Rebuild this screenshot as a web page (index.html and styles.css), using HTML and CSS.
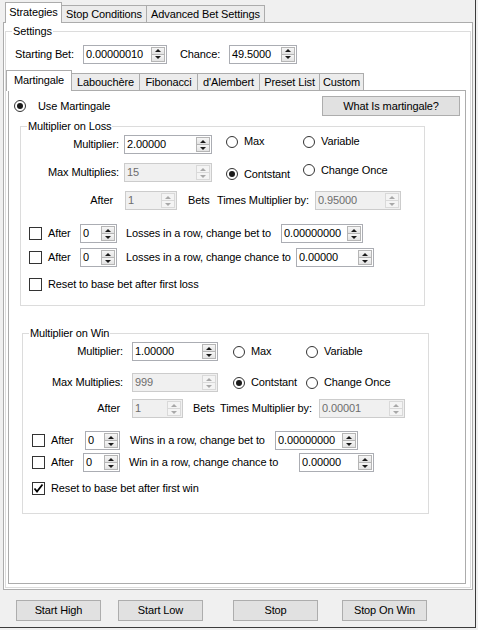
FILE: index.html
```html
<!DOCTYPE html>
<html>
<head>
<meta charset="utf-8">
<link rel="stylesheet" href="styles.css">
</head>
<body>
<div class="window">
  <div class="tabstrip outer-strip">
    <div class="tab sel t-strat">Strategies</div>
    <div class="tab t-stop">Stop Conditions</div>
    <div class="tab t-adv">Advanced Bet Settings</div>
  </div>
  <div class="page outer-page">
    <div class="group settings">
      <div class="gtitle">Settings</div>
      <div class="srow">
        <span class="s-lbl1">Starting Bet:</span>
        <div class="num s-bet"><span class="val">0.00000010</span><span class="spin"><span class="up"></span><span class="dn"></span></span></div>
        <span class="s-lbl2">Chance:</span>
        <div class="num s-ch"><span class="val">49.5000</span><span class="spin"><span class="up"></span><span class="dn"></span></span></div>
      </div>
      <div class="tabstrip inner-strip">
        <div class="tab sel i-mart">Martingale</div>
        <div class="tab i-lab">Labouchère</div>
        <div class="tab i-fib">Fibonacci</div>
        <div class="tab i-dal">d'Alembert</div>
        <div class="tab i-pre">Preset List</div>
        <div class="tab i-cus">Custom</div>
      </div>
      <div class="page inner-page">
        <div class="toprow">
          <div class="radio on use"><span class="rb"></span><span class="rt">Use Martingale</span></div>
          <div class="btn what">What Is martingale?</div>
        </div>

        <div class="group loss">
          <div class="gtitle">Multiplier on Loss</div>
          <div class="grow r1">
            <span class="flabel">Multiplier:</span>
            <div class="num mult"><span class="val">2.00000</span><span class="spin"><span class="up"></span><span class="dn"></span></span></div>
            <div class="radio opt1"><span class="rb"></span><span class="rt">Max</span></div>
            <div class="radio opt2"><span class="rb"></span><span class="rt">Variable</span></div>
          </div>
          <div class="grow r2">
            <span class="flabel">Max Multiplies:</span>
            <div class="num mult dis"><span class="val">15</span><span class="spin"><span class="up"></span><span class="dn"></span></span></div>
            <div class="radio on opt1"><span class="rb"></span><span class="rt">Contstant</span></div>
            <div class="radio opt2"><span class="rb"></span><span class="rt">Change Once</span></div>
          </div>
          <div class="grow r3">
            <span class="flabel after">After</span>
            <div class="num aft-in dis"><span class="val">1</span><span class="spin"><span class="up"></span><span class="dn"></span></span></div>
            <span class="bets">Bets</span>
            <span class="times">Times Multiplier by:</span>
            <div class="num times-in dis"><span class="val">0.95000</span><span class="spin"><span class="up"></span><span class="dn"></span></span></div>
          </div>
          <div class="grow r4">
            <span class="cb"></span>
            <span class="after-t">After</span>
            <div class="num cnt"><span class="val">0</span><span class="spin"><span class="up"></span><span class="dn"></span></span></div>
            <span class="rowtext t1">Losses in a row, change bet to</span>
            <div class="num bet"><span class="val">0.00000000</span><span class="spin"><span class="up"></span><span class="dn"></span></span></div>
          </div>
          <div class="grow r5">
            <span class="cb"></span>
            <span class="after-t">After</span>
            <div class="num cnt"><span class="val">0</span><span class="spin"><span class="up"></span><span class="dn"></span></span></div>
            <span class="rowtext t2">Losses in a row, change chance to</span>
            <div class="num chance"><span class="val">0.00000</span><span class="spin"><span class="up"></span><span class="dn"></span></span></div>
          </div>
          <div class="grow r6">
            <span class="cb"></span>
            <span class="after-t">Reset to base bet after first loss</span>
          </div>
        </div>

        <div class="group win">
          <div class="gtitle">Multiplier on Win</div>
          <div class="grow r1">
            <span class="flabel">Multiplier:</span>
            <div class="num mult"><span class="val">1.00000</span><span class="spin"><span class="up"></span><span class="dn"></span></span></div>
            <div class="radio opt1"><span class="rb"></span><span class="rt">Max</span></div>
            <div class="radio opt2"><span class="rb"></span><span class="rt">Variable</span></div>
          </div>
          <div class="grow r2">
            <span class="flabel">Max Multiplies:</span>
            <div class="num mult dis"><span class="val">999</span><span class="spin"><span class="up"></span><span class="dn"></span></span></div>
            <div class="radio on opt1"><span class="rb"></span><span class="rt">Contstant</span></div>
            <div class="radio opt2"><span class="rb"></span><span class="rt">Change Once</span></div>
          </div>
          <div class="grow r3">
            <span class="flabel after">After</span>
            <div class="num aft-in dis"><span class="val">1</span><span class="spin"><span class="up"></span><span class="dn"></span></span></div>
            <span class="bets">Bets</span>
            <span class="times">Times Multiplier by:</span>
            <div class="num times-in dis"><span class="val">0.00001</span><span class="spin"><span class="up"></span><span class="dn"></span></span></div>
          </div>
          <div class="grow r4">
            <span class="cb"></span>
            <span class="after-t">After</span>
            <div class="num cnt"><span class="val">0</span><span class="spin"><span class="up"></span><span class="dn"></span></span></div>
            <span class="rowtext t1">Wins in a row, change bet to</span>
            <div class="num bet"><span class="val">0.00000000</span><span class="spin"><span class="up"></span><span class="dn"></span></span></div>
          </div>
          <div class="grow r5">
            <span class="cb"></span>
            <span class="after-t">After</span>
            <div class="num cnt"><span class="val">0</span><span class="spin"><span class="up"></span><span class="dn"></span></span></div>
            <span class="rowtext t2">Win in a row, change chance to</span>
            <div class="num chance"><span class="val">0.00000</span><span class="spin"><span class="up"></span><span class="dn"></span></span></div>
          </div>
          <div class="grow r6">
            <span class="cb checked"><svg width="11" height="11" viewBox="0 0 11 11"><path d="M1.5 5.5 L4 8.5 L9.5 1.5" fill="none" stroke="#000" stroke-width="1.8"/></svg></span>
            <span class="after-t">Reset to base bet after first win</span>
          </div>
        </div>
      </div>
    </div>
  </div>
  <div class="buttons">
    <div class="btn b1">Start High</div>
    <div class="btn b2">Start Low</div>
    <div class="btn b3">Stop</div>
    <div class="btn b4">Stop On Win</div>
  </div>
</div>
</body>
</html>
```
FILE: styles.css
```css
* { box-sizing: border-box; }
body {
  margin: 0;
  background: #f0f0f0;
  font-family: "Liberation Sans", Arial, sans-serif;
  font-size: 11px;
  letter-spacing: -0.12px;
  color: #000;
  line-height: 13px;
}
.window {
  width: 476px;
  height: 628px;
  padding: 2px 0 0 3px;
  background: #f0f0f0;
  border-right: 1px solid #3c3c3c;
  border-bottom: 1px solid #3c3c3c;
}

/* tabs */
.tabstrip { display: flex; align-items: flex-end; height: 20px; }
.outer-strip { padding-left: 2px; }
.tab {
  height: 17px;
  border: 1px solid #acacac;
  border-bottom: none;
  background: #ececec;
  display: flex;
  align-items: center;
  justify-content: center;
  white-space: nowrap;
}
.tab + .tab { border-left: none; }
.tab.sel {
  height: 21px;
  margin-bottom: -1px;
  background: #fff;
  position: relative;
  z-index: 1;
  padding-bottom: 1px;
}
.t-strat { width: 57px; }
.t-stop { width: 85px; }
.t-adv { width: 118px; }
.i-mart { width: 66px; }
.i-lab { width: 68px; }
.i-fib { width: 58px; }
.i-dal { width: 62px; }
.i-pre { width: 60px; }
.i-cus { width: 44px; }

.page { border: 1px solid #acacac; background: #fff; }
.outer-page { width: 470px; height: 568px; }
.inner-page { width: 458px; height: 494px; margin-left: 2px; }

/* group boxes */
.group { border: 1px solid #dcdcdc; }
.gtitle {
  margin: -7px 0 0 6px;
  padding: 0 1px;
  width: max-content;
  background: #fff;
  line-height: 13px;
}
.settings { margin: 8px 1px 0 1px; padding-bottom: 3px; }

.srow { display: flex; align-items: center; height: 20px; margin-top: 6px; }
.s-lbl1 { margin-left: 9px; width: 68px; }
.s-bet { width: 84px; height: 20px; }
.s-lbl2 { margin-left: 13px; width: 49px; }
.s-ch { width: 68px; height: 20px; }
.inner-strip { margin-top: 6px; }

/* numeric up/down */
.num {
  height: 19px;
  border: 1px solid #abadb3;
  background: #fff;
  display: flex;
  align-items: stretch;
  padding: 1px 1px 1px 2px;
}
.num .val { flex: 1; display: flex; align-items: center; }
.spin { width: 14px; display: flex; flex-direction: column; }
.spin .up, .spin .dn {
  flex: 1;
  border: 1px solid #b5b5b5;
  background: linear-gradient(#f6f6f6, #e3e3e3);
  display: flex;
  align-items: center;
  justify-content: center;
}
.spin .dn { border-top: none; }
.spin .up::before {
  content: "";
  border-left: 3px solid transparent;
  border-right: 3px solid transparent;
  border-bottom: 3px solid #1a1a1a;
}
.spin .dn::before {
  content: "";
  border-left: 3px solid transparent;
  border-right: 3px solid transparent;
  border-top: 3px solid #1a1a1a;
}
.num.dis { background: #f0f0f0; border-color: #cccccc; color: #6d6d6d; }
.num.dis .spin .up, .num.dis .spin .dn { border-color: #d9d9d9; background: #f4f4f4; }
.num.dis .spin .up::before { border-bottom-color: #a8a8a8; }
.num.dis .spin .dn::before { border-top-color: #a8a8a8; }

/* radio + checkbox */
.radio { display: flex; align-items: center; white-space: nowrap; }
.rb {
  width: 12px;
  height: 12px;
  border: 1px solid #333;
  border-radius: 50%;
  background: #fff;
  display: flex;
  align-items: center;
  justify-content: center;
  flex: none;
}
.radio.on .rb::before {
  content: "";
  width: 6px;
  height: 6px;
  border-radius: 50%;
  background: #1a1a1a;
}
.rt { margin-left: 6px; }
.cb {
  width: 13px;
  height: 13px;
  border: 1px solid #333;
  background: #fff;
  flex: none;
  display: flex;
  align-items: center;
  justify-content: center;
}
.cb svg { display: block; }

/* buttons */
.btn {
  height: 21px;
  border: 1px solid #adadad;
  background: #e1e1e1;
  display: flex;
  align-items: center;
  justify-content: center;
  white-space: nowrap;
}

/* inner page */
.toprow { display: flex; align-items: center; height: 20px; margin-top: 5px; }
.use { margin-left: 5px; }
.use .rt { margin-left: 12px; }
.what { margin-left: auto; margin-right: 5px; width: 138px; height: 20px; }

.grow { display: flex; align-items: center; white-space: nowrap; }
.grow .num { flex: none; }
.flabel { text-align: right; }

/* loss group */
.loss { margin: 10px 0 0 11px; width: 405px; padding-bottom: 14px; }
.loss .r1 { margin-top: 2px; }
.loss .r2 { margin-top: 9px; }
.loss .r3 { margin-top: 9px; }
.loss .r4 { margin-top: 14px; }
.loss .r5 { margin-top: 5px; }
.loss .r6 { margin-top: 11px; }
.loss .r1 .radio { margin-bottom: 6px; }
.loss .r2 .opt1 { margin-top: 3px; }
.loss .r2 .opt2 { margin-bottom: 5px; }
.loss .flabel { width: 98px; }
.loss .flabel.after { width: 92px; }
.loss .mult { margin-left: 5px; width: 88px; }
.loss .opt1 { margin-left: 14px; width: 77px; }
.loss .aft-in { margin-left: 12px; width: 52px; }
.loss .bets { margin-left: 11px; width: 22px; }
.loss .times { margin-left: 7px; width: 98px; }
.loss .times-in { width: 86px; }
.loss .cb { margin-left: 8px; }
.loss .after-t { margin-left: 6px; width: 32px; }
.loss .r6 .after-t { width: auto; }
.loss .cnt { width: 37px; }
.loss .t1 { margin-left: 9px; width: 155px; }
.loss .bet { width: 82px; }
.loss .t2 { margin-left: 9px; width: 170px; }
.loss .chance { width: 78px; }

/* win group */
.win { margin: 27px 0 0 13px; width: 407px; padding-bottom: 18px; }
.win .r1 { margin-top: 2px; }
.win .r2 { margin-top: 12px; }
.win .r3 { margin-top: 7px; }
.win .r4 { margin-top: 13px; }
.win .r5 { margin-top: 3px; }
.win .r6 { margin-top: 10px; }
.win .flabel { width: 100px; }
.win .flabel.after { width: 97px; }
.win .mult { margin-left: 9px; width: 86px; }
.win .opt1 { margin-left: 15px; width: 73px; }
.win .aft-in { margin-left: 12px; width: 51px; }
.win .bets { margin-left: 10px; width: 22px; }
.win .times { margin-left: 5px; width: 99px; }
.win .times-in { width: 86px; }
.win .cb { margin-left: 9px; }
.win .after-t { margin-left: 6px; width: 34px; }
.win .r5 .after-t { width: 32px; }
.win .r6 .after-t { width: auto; }
.win .r4 .cnt { width: 35px; }
.win .r5 .cnt { width: 37px; }
.win .t1 { margin-left: 10px; width: 145px; }
.win .bet { width: 83px; }
.win .t2 { margin-left: 9px; width: 170px; }
.win .chance { width: 75px; }

/* bottom buttons */
.buttons { display: flex; margin-top: 10px; }
.buttons .btn { width: 85px; }
.b1 { margin-left: 13px; }
.b2 { margin-left: 17px; }
.b3 { margin-left: 30px; }
.b4 { margin-left: 24px; }
```
